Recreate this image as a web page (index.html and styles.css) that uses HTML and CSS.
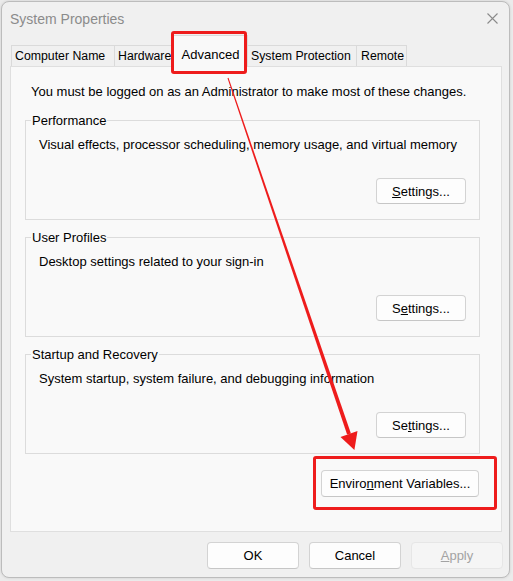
FILE: index.html
```html
<!DOCTYPE html>
<html>
<head>
<meta charset="utf-8">
<title>System Properties</title>
<link rel="stylesheet" href="styles.css">
</head>
<body>
<div class="window">
  <div class="titlebar">
    <span class="title">System Properties</span>
    <svg class="close" width="11" height="11" viewBox="0 0 11 11"><path d="M0.5 0.5L10.5 10.5M10.5 0.5L0.5 10.5" stroke="#8a8a8a" stroke-width="1.1" fill="none"/></svg>
  </div>
  <div class="tabs">
    <div class="tab t1">Computer Name</div>
    <div class="tab t2">Hardware</div>
    <div class="tab active">Advanced</div>
    <div class="tab t4">System Protection</div>
    <div class="tab t5">Remote</div>
  </div>
  <div class="panel">
    <p class="note">You must be logged on as an Administrator to make most of these changes.</p>
    <fieldset class="group">
      <legend>Performance</legend>
      <p class="desc">Visual effects, processor scheduling, memory usage, and virtual memory</p>
      <button class="btn settings"><u>S</u>ettings...</button>
    </fieldset>
    <fieldset class="group">
      <legend>User Profiles</legend>
      <p class="desc">Desktop settings related to your sign-in</p>
      <button class="btn settings">S<u>e</u>ttings...</button>
    </fieldset>
    <fieldset class="group">
      <legend>Startup and Recovery</legend>
      <p class="desc">System startup, system failure, and debugging information</p>
      <button class="btn settings">Se<u>t</u>tings...</button>
    </fieldset>
    <div class="env-row"><button class="btn env">Enviro<u>n</u>ment Variables...</button></div>
  </div>
  <div class="footer">
    <button class="btn foot">OK</button>
    <button class="btn foot">Cancel</button>
    <button class="btn foot disabled"><u>A</u>pply</button>
  </div>
</div>
<div class="mark mark-tab"></div>
<div class="mark mark-env"></div>
<svg class="arrow" width="513" height="581" viewBox="0 0 513 581">
  <polygon points="227.5,78.2 228.5,77.8 350.9,433.4 347.1,434.6" fill="#ee1c1c"/>
  <polygon points="340.5,436.9 357.5,431.1 354.4,450.1" fill="#ee1c1c"/>
</svg>
</body>
</html>
```

FILE: styles.css
```css
* { box-sizing: border-box; }
html, body { margin: 0; padding: 0; }
body {
  width: 513px;
  height: 581px;
  background: #ebebeb;
  font-family: "Liberation Sans", Arial, sans-serif;
  font-size: 13px;
  color: #000;
  position: relative;
  overflow: hidden;
}
.window {
  margin: 1px 0 0 1px;
  width: 509px;
  height: 577px;
  background: #f0f0f0;
  border: 1px solid #bcbcbc;
  border-radius: 8px;
  box-shadow: 0 0 3px rgba(0,0,0,0.12);
  display: flex;
  flex-direction: column;
}
.titlebar {
  height: 33px;
  display: flex;
  align-items: center;
  justify-content: space-between;
  padding: 0 11px 0 8px;
}
.title { font-size: 14px; color: #8b8b8b; line-height: 16px; }
.close { display: block; }
.tabs {
  height: 31px;
  display: flex;
  align-items: flex-end;
  padding-left: 9px;
  position: relative;
  z-index: 1;
}
.tab {
  height: 21px;
  border: 1px solid #dadada;
  border-bottom: none;
  margin-right: -1px;
  background: #f0f0f0;
  font-size: 12.3px;
  line-height: 15px;
  display: flex;
  align-items: center;
  justify-content: flex-start;
  padding-left: 3px;
  white-space: nowrap;
  overflow: hidden;
}
.t1 { width: 104px; }
.t2 { width: 60px; }
.t4 { width: 110px; }
.t5 { width: 51px; padding-left: 4px; }
.tab.active {
  width: 75px;
  height: 32px;
  margin-bottom: -1px;
  background: #f9f9f9;
  font-size: 13px;
  align-items: flex-start;
  justify-content: center;
  padding: 11px 0 0 0;
  position: relative;
  z-index: 2;
}
.panel {
  margin-left: 8px;
  width: 492px;
  height: 466px;
  background: #f9f9f9;
  border: 1px solid #dfdfdf;
  padding: 17px 21px 0 14px;
}
.note { margin: 0 0 14px 6px; line-height: 15px; }
.group {
  margin: 0 0 10px 0;
  padding: 0 13px 15px 13px;
  border: 1px solid #dcdcdc;
  min-width: 0;
}
.group legend {
  margin-left: -8px;
  padding: 0 1px;
  line-height: 15px;
}
.desc { margin: 9px 0 0 0; line-height: 15px; }
.btn {
  font-family: "Liberation Sans", Arial, sans-serif;
  font-size: 13px;
  color: #000;
  background: #fdfdfd;
  border: 1px solid #d3d3d3;
  border-bottom-color: #c6c6c6;
  border-radius: 4px;
  padding: 0;
  display: flex;
  align-items: center;
  justify-content: center;
}
.settings {
  width: 90px;
  height: 26px;
  margin: 26px 0 0 auto;
}
.env-row { display: flex; justify-content: flex-end; padding-right: 1px; margin-top: 16px; }
.env { width: 158px; height: 27px; }
.footer {
  display: flex;
  justify-content: flex-end;
  gap: 10px;
  padding: 10px 6px 0 0;
}
.foot { width: 92px; height: 27px; }
.foot.disabled {
  background: #f5f5f5;
  border-color: #e6e6e6;
  color: #a3a3a3;
}
.mark {
  position: absolute;
  border: 3px solid #ee1c1c;
  border-radius: 3px;
  z-index: 5;
}
.mark-tab { left: 171px; top: 31px; width: 76px; height: 43px; }
.mark-env { left: 313px; top: 456px; width: 184px; height: 54px; }
.arrow { position: absolute; left: 0; top: 0; z-index: 6; pointer-events: none; }
```
